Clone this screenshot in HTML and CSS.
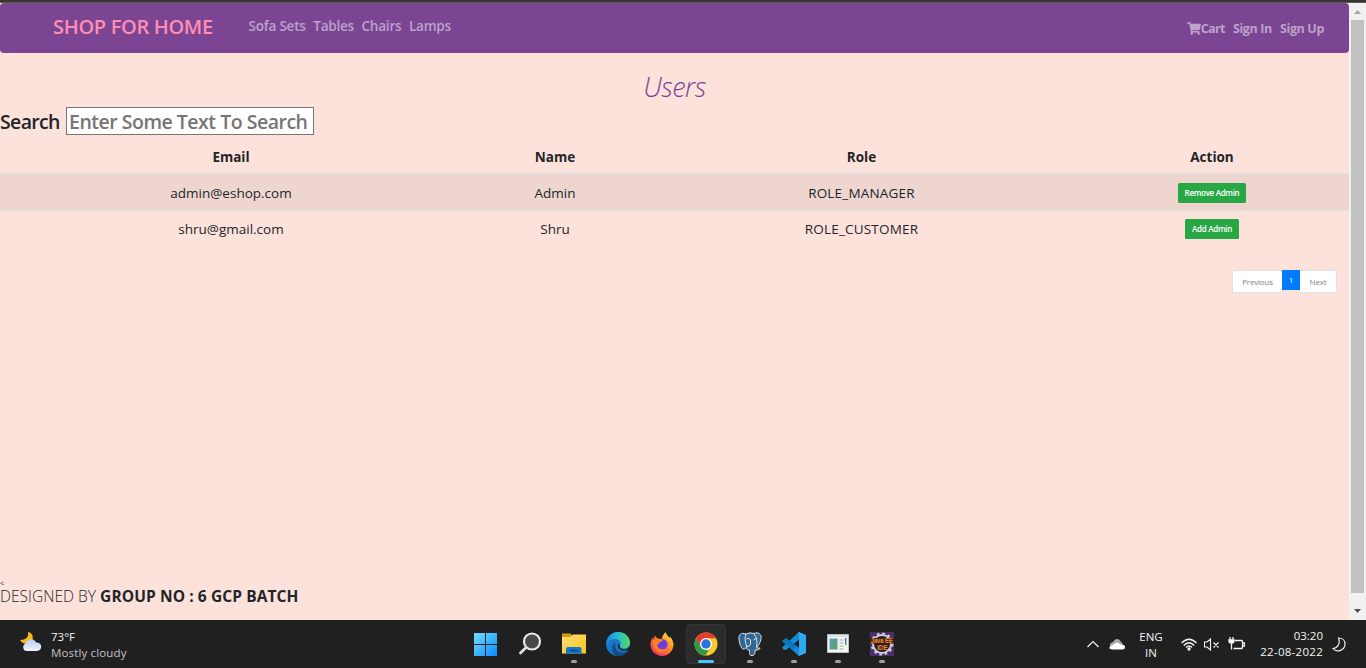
FILE: index.html
```html
<!DOCTYPE html>
<html lang="en">
<head>
<meta charset="utf-8">
<title>Shop For Home</title>
<link rel="stylesheet" href="styles.css">
</head>
<body>
<div class="window-edge"></div>
<div class="browser">
  <div class="page">
    <nav class="navbar">
      <a class="brand">SHOP FOR HOME</a>
      <div class="links"><a>Sofa Sets</a><a>Tables</a><a>Chairs</a><a>Lamps</a></div>
      <div class="account">
        <a class="cart"><svg width="14" height="13" viewBox="0 0 576 512"><path fill="currentColor" d="M528 301l47-208c4-15-8-29-23-29H159l-9-45C148 8 138 0 126 0H24C11 0 0 11 0 24v16c0 13 11 24 24 24h70l70 343c-17 10-28 28-28 49 0 31 25 56 56 56s56-25 56-56c0-16-6-30-17-40h210c-11 10-17 24-17 40 0 31 25 56 56 56s56-25 56-56c0-22-13-41-32-50l6-25c3-16-8-29-24-29H218l-6-32h293c11 0 21-8 23-19z"/></svg>Cart</a><a>Sign In</a><a>Sign Up</a>
      </div>
    </nav>
    <h1 class="title">Users</h1>
    <div class="search"><label for="q">Search</label><input id="q" type="text" placeholder="Enter Some Text To Search"></div>
    <table class="users">
      <colgroup><col class="c-email"><col class="c-name"><col class="c-role"><col class="c-action"></colgroup>
      <thead><tr><th>Email</th><th>Name</th><th>Role</th><th>Action</th></tr></thead>
      <tbody>
        <tr class="striped"><td>admin@eshop.com</td><td>Admin</td><td class="role">ROLE_MANAGER</td><td><button class="btn">Remove Admin</button></td></tr>
        <tr><td>shru@gmail.com</td><td>Shru</td><td class="role">ROLE_CUSTOMER</td><td><button class="btn btn-add">Add Admin</button></td></tr>
      </tbody>
    </table>
    <div class="pager"><span class="prev">Previous</span><span class="current">1</span><span class="next">Next</span></div>
    <footer class="footer"><div class="stray">&lt;</div><div class="credit">DESIGNED BY <b>GROUP NO : 6 GCP BATCH</b></div></footer>
  </div>
  <div class="scrollbar">
    <svg width="17" height="17" viewBox="0 0 17 17"><path fill="#a3a3a3" d="M5 11h7L8.500 7z"/></svg>
    <div class="thumb"></div>
    <svg width="17" height="27" viewBox="0 0 17 27"><path fill="#505050" d="M5 16h7l-3.500 4z"/></svg>
  </div>
</div>
<div class="taskbar">
  <div class="weather">
    <svg width="22" height="20" viewBox="0 0 22 20"><defs><linearGradient id="cl" x2="0" y2="1"><stop stop-color="#b8cdf2"/><stop offset="1" stop-color="#f1f5fb"/></linearGradient></defs><path fill="#fdb813" d="M8 0c5 1 6 6 3.500 9.500C8 13 2 12 0 8c6 0 9-3 8-8z"/><path fill="url(#cl)" d="M6 19a4 4 0 0 1-.500-7.500 5.600 5.600 0 0 1 10.500-1A4.300 4.300 0 1 1 17 19z"/></svg>
    <div><div class="temp">73°F</div><div class="sky">Mostly cloudy</div></div>
  </div>
  <div class="apps">
    <div class="app"><svg width="24" height="24" viewBox="0 0 24 24"><defs><linearGradient id="win" x2="1" y2="1"><stop stop-color="#75dcff"/><stop offset="1" stop-color="#078bff"/></linearGradient></defs><path fill="url(#win)" d="M0 1h11v11H0zM12 1h11v11H12zM0 13h11v11H0zM12 13h11v11H12z"/></svg></div>
    <div class="app"><svg width="24" height="24" viewBox="0 0 24 24"><circle cx="14" cy="9.500" r="8" fill="#484848" stroke="#e8e8e8" stroke-width="2.200"/><path d="M8 15.500L2.500 21" stroke="#e0e0e0" stroke-width="2.800" stroke-linecap="round"/></svg></div>
    <div class="app"><svg width="24" height="24" viewBox="0 0 24 24"><defs><linearGradient id="fo" x2="1" y2="1"><stop stop-color="#ffe27a"/><stop offset="1" stop-color="#ffbf1c"/></linearGradient></defs><path fill="#d99b08" d="M0 1.500h8.500L10 3v3H0z"/><path fill="url(#fo)" d="M0 5h8.500L11 2.500h13v19H0z"/><path fill="#1276ca" d="M4 21.500V17q0-2 2-2h11.500q2 0 2 2v4.500z"/><path stroke="#074b8e" stroke-width="1.500" d="M8 18.500h8"/></svg><i></i></div>
    <div class="app"><svg width="24" height="24" viewBox="0 0 24 24"><defs><linearGradient id="e1"><stop stop-color="#218bd7"/><stop offset=".45" stop-color="#25b7db"/><stop offset="1" stop-color="#55da55"/></linearGradient><linearGradient id="e2" y2="1"><stop stop-color="#1a82d5"/><stop offset="1" stop-color="#1266b5"/></linearGradient></defs><circle cx="12" cy="12" r="12" fill="url(#e2)"/><path fill="url(#e1)" d="M1 9C3 3 7 0 12 0c7 0 12 5 12 10.500 0 4-3 6-6 6-3.500 0-4.500-1.500-4-2.500 2-3 0-7-5-7-4 0-7 2-8.500 5z"/><path fill="#154b86" d="M9 13c0 5 4 8.500 9 7.500q3-.5 4-2-4 6-10.500 5.500C5 22 5 14 9 10z"/><path fill="#202020" d="M14 14.200c-.5 1.300 1 3 4.500 3q3 0 5.500-3v3.300q-5 2-9 .2c-3-1.500-3.500-3.200-2.800-5.200q1.500-.5 1.800 1.700z"/></svg></div>
    <div class="app"><svg width="24" height="24" viewBox="0 0 24 24"><defs><linearGradient id="ff" x1="1" x2=".2" y2="1"><stop stop-color="#fff13f"/><stop offset=".45" stop-color="#ff9228"/><stop offset="1" stop-color="#f5246b"/></linearGradient></defs><path fill="url(#ff)" d="M15.500 0c1 3 3 4 4 6l.5-1.500C22 6.500 23.500 10 23.500 13 23 19.500 18 24 12 24S.3 19 .5 12.500C.5 9.500 1.500 7 3.500 5v3l1-.5L4.500 3.500 8 7l4-.3C12 4 14 2 15.500 0z"/><circle cx="12" cy="12.500" r="5.600" fill="#6d3be0"/><path fill="#ff7d24" d="M2.500 8.500q3-3.500 9.500-1c2 .500 0 2.500-3 3 0 2-1 2-2 2.500 1 5 8 6 10.500 1.500-.5 5-4.500 7-8.500 6-5-1.500-6.500-7-6.500-12z"/></svg></div>
    <div class="app active"><svg width="24" height="24" viewBox="0 0 24 24"><circle cx="12" cy="12" r="11.500" fill="#fbc82b"/><path fill="#e33b2e" d="M2 6.300A11.500 11.500 0 0 1 22 6.300H12L7 15z"/><path fill="#2b9b49" d="M2 6.300l5 8.700 5 2.700 2.500 1-3.500 4.800A11.500 11.500 0 0 1 2 6.300z"/><circle cx="12" cy="12" r="6" fill="#fff"/><circle cx="12" cy="12" r="4.700" fill="#2874df"/></svg><i></i></div>
    <div class="app"><svg width="24" height="24" viewBox="0 0 24 24"><g fill="#336791" stroke="#dce3e8" stroke-width="1" stroke-linejoin="round"><path d="M8 2C3 0 .5 3 1 7c.5 5 2 9 4 10 1.500.500 3-1 4-3z"/><path d="M16 1.500c4-2 8 1 7 5-.5 4-2.500 7-4.500 9.500h3q1 0 0 1-2 1.500-4.500 1c0 3 0 5.500-3 5.500S11.500 22 11.500 18C9 18 7.500 17 9 14.500 7 11 6.500 5 8 2q4-2 8-.5z"/><path fill="none" d="M8.500 7q3-2 4 1v4q-.5 2.500-3.500 2.500M16 2q4 4 2.500 13M15.500 8q1.500-2 3.500-1"/></g></svg><i></i></div>
    <div class="app"><svg width="24" height="24" viewBox="0 0 24 24"><path fill="#168bd1" d="M17 0L0 15.500l1.700 2.200L4 18 18 7V0z"/><path fill="#0879bd" d="M4 6L.2 8.500v1L17 24l2-1V17z"/><path fill="#2cabf2" d="M17 0l7 3v18l-7 3z"/><path fill="#168bd1" d="M17 0v7l-3 2.500L11 6zM17 24v-7l-3-2.500L11 18z"/></svg><i></i></div>
    <div class="app"><svg width="24" height="24" viewBox="0 0 24 24"><defs><linearGradient id="gr" x2="1" y2="1"><stop stop-color="#6b9bb8"/><stop offset="1" stop-color="#4fa35c"/></linearGradient></defs><path fill="#f4f4f4" stroke="#b9bec4" d="M1.500 2.500h21v18h-21z"/><path fill="#dde2e7" d="M2 3h20v2H2z"/><path fill="url(#gr)" d="M3.500 6.500h8v11h-8z"/><path stroke="#a9a9a9" d="M13.500 8h4m-4 3h4m-4 3h4m-4 3h4"/><path fill="#387ab8" d="M19 6h1.500v4H19z"/><path fill="#44a15c" d="M19 10h1.500v3H19z"/></svg><i></i></div>
    <div class="app"><svg class="ide-icon" width="24" height="24" viewBox="0 0 24 24"><path fill="#48306c" d="M0 0h24v24H0z"/><circle cx="12" cy="12" r="9" fill="#241b29" stroke="#d4d0d2" stroke-width="2"/><circle cx="12" cy="12" r="10.500" fill="none" stroke="#d4d0d2" stroke-width="2" stroke-dasharray="2.500 3"/><path fill="#402719" d="M0 6h24v5.500H0z"/><text x=".7" y="11" textLength="22" lengthAdjust="spacingAndGlyphs" class="ide">Java EE</text><text x="7" y="17.500" textLength="11" lengthAdjust="spacingAndGlyphs" class="ide">IDE</text></svg><i></i></div>
  </div>
  <div class="tray">
    <svg class="chev" width="12" height="8" viewBox="0 0 12 8" fill="none" stroke="#f2f2f2" stroke-width="1.200"><path d="M.5 7L6 1.500 11.500 7"/></svg>
    <svg class="cloud" width="16" height="11" viewBox="0 0 16 11"><path fill="#a8a8a8" d="M2 8Q-1 4 4 3q2-4 6-2.500L14 5 6 9z"/><path fill="#fff" d="M3.500 10.500Q0 10.500.5 8q1-2 4-2.500Q8 2 11.500 5.500 16 5 16 8q0 2.500-3 2.500z"/></svg>
    <div class="lang">ENG<br>IN</div>
    <svg class="wifi" width="16" height="13" viewBox="0 0 16 13" fill="none" stroke="#f5f5f5" stroke-width="1.300"><path d="M.5 5Q8-2.500 15.500 5M2.700 7.500Q8 2 13.300 7.500M5 9.500q3-3 6 0"/><circle cx="8" cy="11" r="1" fill="#fff"/></svg>
    <svg class="sound" width="16" height="13" viewBox="0 0 16 13" fill="none" stroke="#f5f5f5" stroke-width="1.100"><path d="M.5 4h2.500l3.500-3v11L3 9H.5zM9.500 4.500l5 5m0-5l-5 5"/></svg>
    <svg class="battery" width="17" height="14" viewBox="0 0 17 14" fill="none" stroke="#f5f5f5" stroke-width="1.300"><path d="M7 3.500h6.500q1 0 1 1v6q0 1-1 1H5.500M3.500 6v6.500M2 0v3M5 0v3M15 6h1.500v3H15"/><path fill="#fff" d="M1 3h5v1.500q0 1.500-2.500 1.500T1 4.500z"/></svg>
    <div class="clock">03:20<br><span class="date">22-08-2022</span></div>
    <svg class="moon" width="14" height="15" viewBox="0 0 14 15" fill="none" stroke="#f0f0f0" stroke-width="1.200"><path d="M6.500 1C11 1 13 4 13 7c0 6-8 9.500-12 4.500C6 11 8.500 6 6.500 1z"/></svg>
  </div>
</div>
</body>
</html>
```

FILE: styles.css
```css
* { box-sizing: border-box; }
body { margin: 0; width: 1366px; height: 668px; overflow: hidden; display: flex; flex-direction: column; font-family: "Open Sans", "Noto Sans", sans-serif; color: #212529; }
svg { display: block; flex: none; }
.window-edge { height: 3px; background: #383432; border-bottom: 1px solid #5c5957; flex: none; }
.browser { height: 617px; display: flex; flex: none; }
.page { width: 1349px; background: #fde2db; display: flex; flex-direction: column; }
.navbar { height: 50px; background: #7b4594; border-radius: 4px; display: flex; flex: none; color: #bda2ca; font-weight: 600; white-space: nowrap; }
.brand { margin-left: 53px; width: 195.500px; color: #ff8fb1; font-size: 20px; line-height: 48px; letter-spacing: -.32px; }
.links { display: flex; gap: 7.500px; font-size: 13.500px; line-height: 47px; letter-spacing: -.2px; }
.account { display: flex; gap: 8px; margin-left: auto; margin-right: 25px; font-size: 12.500px; line-height: 51px; font-weight: 700; letter-spacing: -.36px; }
.cart { display: flex; align-items: center; letter-spacing: -.6px; }
.title { margin: 14px 0 0; height: 40px; line-height: 40px; text-align: center; font-size: 27px; font-style: italic; font-weight: 300; color: #7b4594; letter-spacing: -.5px; flex: none; }
.search { display: flex; height: 28px; line-height: 30px; font-size: 19.500px; font-weight: 600; letter-spacing: -.49px; }
.search label { width: 66px; letter-spacing: -.65px; }
.search input { width: 248px; height: 28px; padding: 0 2px; border: 1px solid #767676; border-radius: 0; background: #fff; font: inherit; line-height: 26px; letter-spacing: inherit; }
.search input::placeholder { color: #757575; }
.users { width: 1349px; margin-top: 4px; table-layout: fixed; border-collapse: collapse; font-size: 13.500px; flex: none; }
.c-email { width: 462px; }
.c-name { width: 186px; }
.c-role { width: 427px; }
.c-action { width: 274px; }
.users th { height: 34px; padding: 2px 0 0; line-height: 32px; font-weight: 700; }
.users td { height: 37px; padding: 1px 0 0; border-top: 1px solid #dee2e6; text-align: center; line-height: 34px; }
.users .striped td { background: #efd5d0; }
.users tr + tr td { padding: 0; }
.users .role { letter-spacing: .2px; }
.btn { display: block; width: 68px; height: 20px; margin: 0 auto; padding: 0; border: 0; border-radius: 1.500px; background: #28a745; color: #fff; font: 600 8px/20px "Open Sans", sans-serif; letter-spacing: -.3px; }
.btn-add { width: 54px; }
.pager { display: flex; align-self: flex-end; margin: 22px 12px 0 0; height: 23px; font-size: 8px; text-align: center; color: #858585; letter-spacing: -.2px; }
.prev, .next { border: 1px solid #dee2e6; background: #fff; line-height: 22px; }
.prev { width: 50px; border-right: 0; border-radius: 2px 0 0 2px; }
.next { width: 37px; border-left: 0; border-radius: 0 2px 2px 0; }
.current { width: 18px; height: 20px; line-height: 20px; background: #007bff; color: #fff; }
.footer { margin-top: auto; height: 41px; white-space: nowrap; }
.stray { height: 7px; font-size: 7px; line-height: 10px; }
.credit { height: 20px; line-height: 21px; font-size: 15.500px; font-weight: 300; letter-spacing: .03px; }
.credit b { font-weight: 700; letter-spacing: .1px; }
.scrollbar { width: 17px; background: #f1f1f1; }
.thumb { width: 13px; height: 573px; margin-left: 2px; background: #c1c1c1; }
.taskbar { height: 48px; background: #202020; display: flex; color: #f5f5f5; font-size: 11.500px; flex: none; }
.weather { width: 466px; padding: 9px 0 0 20px; display: flex; gap: 9px; line-height: 16px; }
.weather svg { margin-top: 3px; }
.sky { color: #c4c4c4; letter-spacing: .15px; }
.apps { display: flex; gap: 4px; width: 619px; padding-top: 4px; }
.app { width: 40px; height: 40px; display: flex; flex-direction: column; align-items: center; padding-top: 8px; border-radius: 4px; }
.app i { width: 6px; height: 3px; margin-top: 4px; border-radius: 2px; background: #a0a0a0; }
.active { background: #2c2c2c; border: 1px solid #343434; padding-top: 7px; }
.active i { width: 16px; background: #4cc2ff; }
.ide-icon { overflow: visible; }
.ide { font: 700 7px "Liberation Sans", sans-serif; fill: #f38b2c; }
.tray { display: flex; line-height: 16px; width: 281px; }
.chev { margin: 20px 0 0 2px; }
.cloud { margin: 19px 0 0 10px; }
.lang { width: 52px; padding-top: 9px; text-align: center; }
.wifi { margin: 18px 0 0 4px; }
.sound { margin: 18px 0 0 7px; }
.battery { margin: 17px 0 0 8px; }
.clock { width: 78px; padding-top: 8px; text-align: right; }
.date { letter-spacing: .28px; }
.moon { margin: 17px 0 0 9px; }
```
